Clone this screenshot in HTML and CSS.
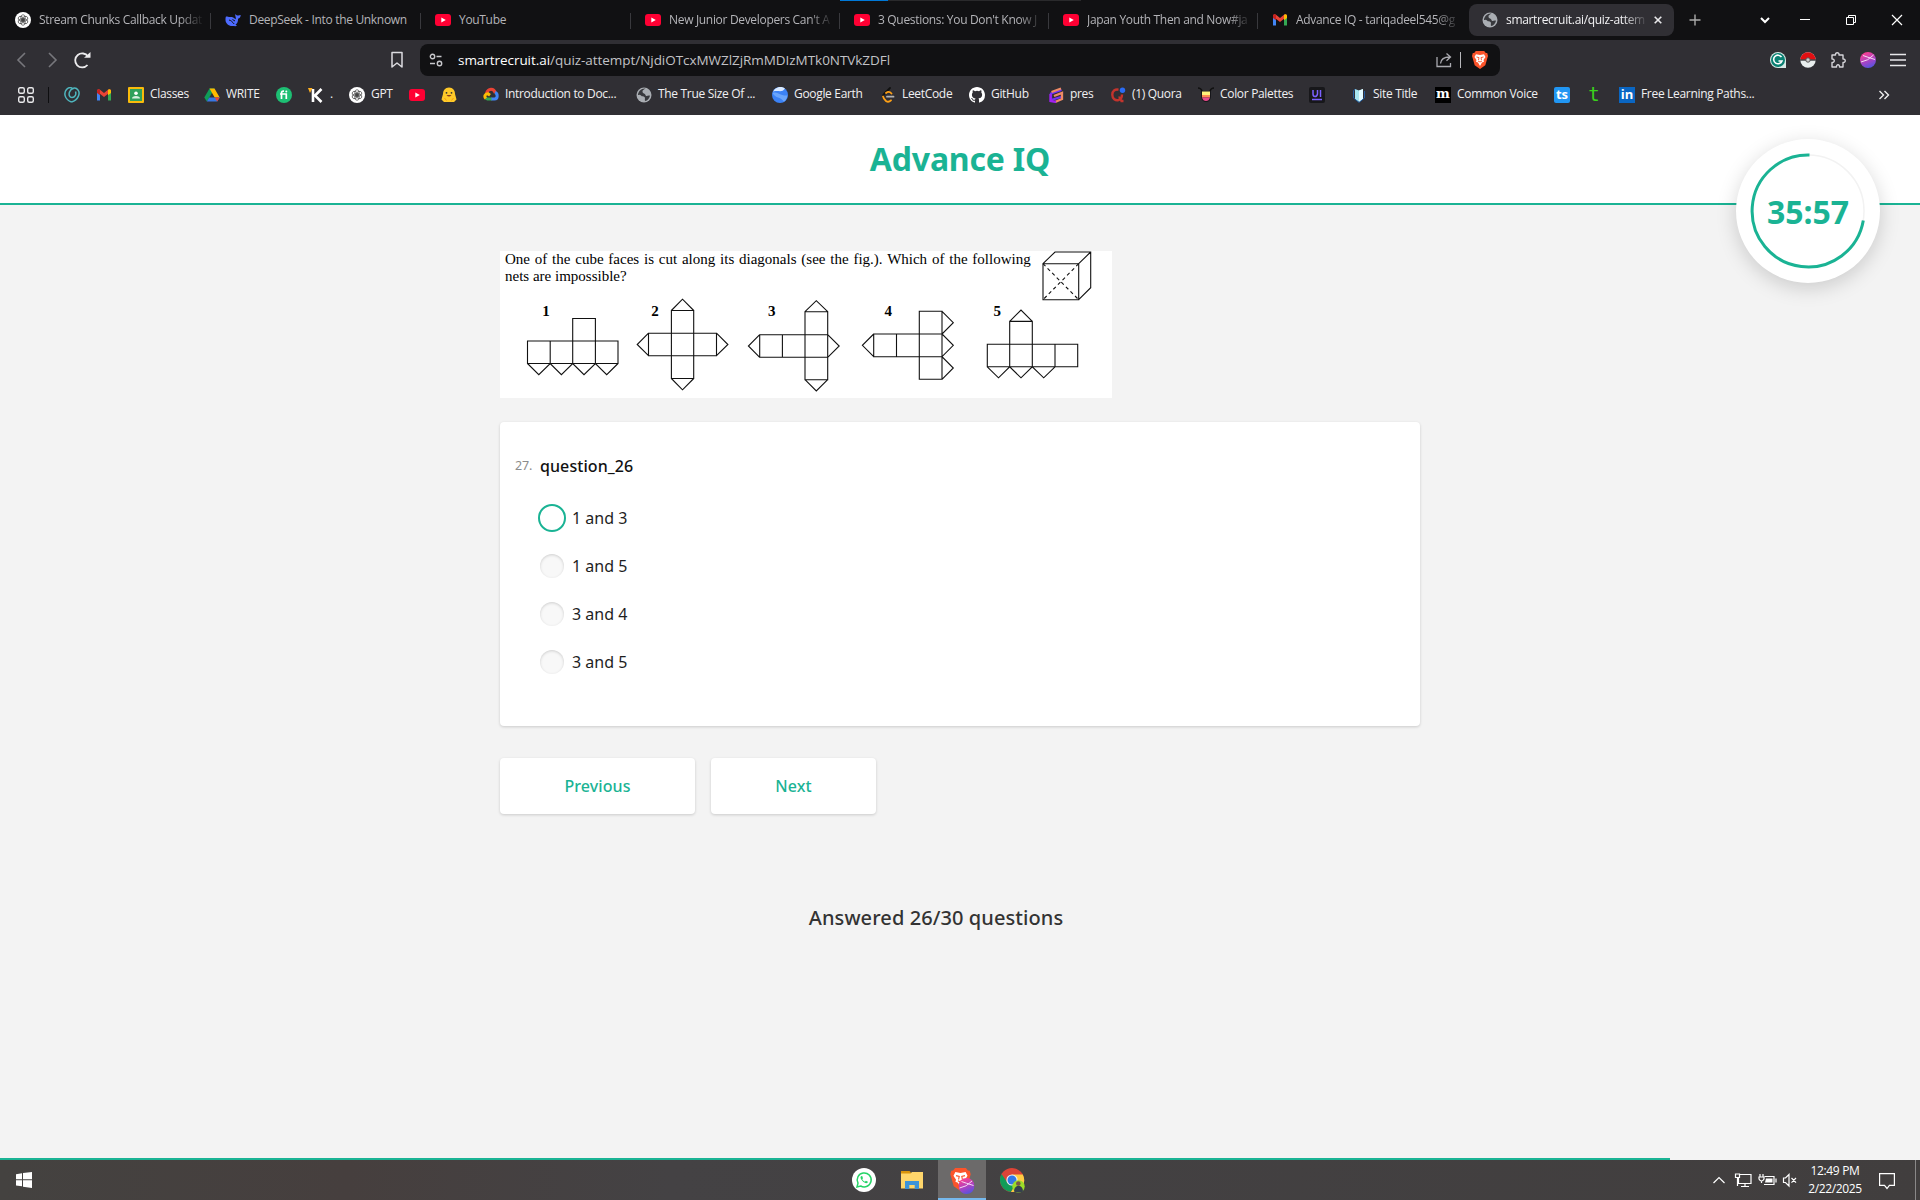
FILE: index.html
```html
<!DOCTYPE html>
<html lang="en">
<head>
<meta charset="utf-8">
<title>Advance IQ</title>
<link rel="stylesheet" href="styles.css">
</head>
<body>
<svg class="defs" width="0" height="0">
  <symbol id="gpt" viewBox="0 0 16 16"><circle cx="8" cy="8" r="8" fill="#fff"/><g fill="none" stroke="#333" stroke-width=".65"><ellipse cx="8" cy="5.800" rx="2.200" ry="3.100"/><ellipse cx="8" cy="5.800" rx="2.200" ry="3.100" transform="rotate(60 8 8)"/><ellipse cx="8" cy="5.800" rx="2.200" ry="3.100" transform="rotate(120 8 8)"/><ellipse cx="8" cy="5.800" rx="2.200" ry="3.100" transform="rotate(180 8 8)"/><ellipse cx="8" cy="5.800" rx="2.200" ry="3.100" transform="rotate(240 8 8)"/><ellipse cx="8" cy="5.800" rx="2.200" ry="3.100" transform="rotate(300 8 8)"/></g></symbol>
  <symbol id="yt" viewBox="0 0 16 16"><rect y="2" width="16" height="12" rx="3" fill="#ff0033"/><path d="M6.3 5.500v5L10.800 8z" fill="#fff"/></symbol>
  <symbol id="gmail" viewBox="0 0 16 16"><path d="M1 3v10.500h3V7.200z" fill="#4285f4"/><path d="M15 3v10.500h-3V7.200z" fill="#34a853"/><path d="M1 4.500 8 10l7-5.500V3.300q-1.300-1.800-3-.5L8 6 4 2.800Q2.300 1.500 1 3.300z" fill="#ea4335"/><path d="M12 2.800q1.800-1.300 3 .5V6l-3 2.200z" fill="#fbbc04"/><path d="M4 2.800Q2.200 1.500 1 3.300V6l3 2.200z" fill="#c5221f"/></symbol>
  <symbol id="globe" viewBox="0 0 16 16"><circle cx="8" cy="8" r="7.500" fill="#a9adb2"/><path d="M9.500 1.500C8 2.500 6 3 6.500 5S9 6 9.500 8s2.500 0 4.500.8c-.5 2.500-2.500 5-5 5.200-.5-2 .5-3-.5-4S6 10 5 8.500 2.500 8 2 8c0-3.500 3.500-7 7.500-6.500z" fill="#38393d"/></symbol>
  <symbol id="brave" viewBox="0 0 16 18"><path d="M3.800 0h8.400l1.600 1.900 1.400.2.800 2.800-.7 2.300-2 7L8 18l-5.300-3.800-2-7L0 4.900l.8-2.800 1.400-.2z" fill="#fb542b"/><path d="M4 3.200 8 4l4-.8L13.500 6l-2 3.100.5 1.600-2 .8L8 15l-2-3.500-2-.8.5-1.600L2.500 6z" fill="#fff"/><path d="m4.500 6 2.500.6L6.500 9M11.500 6 9 6.600l.5 2.400M6 10l2 1 2-1" fill="none" stroke="#fb542b" stroke-width=".9"/></symbol>
  <symbol id="orb" viewBox="0 0 16 16"><linearGradient id="og" x1=".3" y1="0" x2=".7" y2="1"><stop stop-color="#ff3f8e"/><stop offset=".6" stop-color="#a044c8"/><stop offset="1" stop-color="#4e55e0"/></linearGradient><circle cx="8" cy="8" r="8" fill="url(#og)"/><path d="M1 10Q8 9 13.500 3M3 3.500q4 1.500 12 4" fill="none" stroke="#f6d9f4" stroke-width="1"/></symbol>
</svg>

<div class="browser">
  <div class="tabbar">
    <div class="tab"><svg class="ic"><use href="#gpt"/></svg><span class="fade">Stream Chunks Callback Updat</span></div>
    <div class="tab"><svg class="ic" viewBox="0 0 16 16"><path d="M1 4.500c2 0 3 .8 4.500.5 2 0 3.500.5 5 2.200C11.500 6 10 4.500 10.200 2c1 1.500 2 1.500 3 1.500l2.500-.5c0 2-1 3.300-2.700 3.800.3 3-1 5-2.500 5.800l1.500 1.200c-1.500.7-3 .2-4 .2C4 14.500.5 11.500.5 8 .5 6.500.5 5.500 1 4.500z" fill="#4d6bfe"/><path d="M4 8c2 .3 3.500 2 5.200 4M7.500 7.500l2.500 1.500" stroke="#111" fill="none"/></svg><span class="full">DeepSeek - Into the Unknown</span></div>
    <div class="tab"><svg class="ic"><use href="#yt"/></svg><span class="full">YouTube</span></div>
    <div class="tab"><svg class="ic"><use href="#yt"/></svg><span class="fade">New Junior Developers Can't A</span></div>
    <div class="tab"><svg class="ic"><use href="#yt"/></svg><span class="fade">3 Questions: You Don't Know J</span></div>
    <div class="tab"><svg class="ic"><use href="#yt"/></svg><span class="fade">Japan Youth Then and Now#ja</span></div>
    <div class="tab last"><svg class="ic"><use href="#gmail"/></svg><span class="fade">Advance IQ - tariqadeel545@g</span></div>
    <div class="tab active"><svg class="ic"><use href="#globe"/></svg><span class="fade">smartrecruit.ai/quiz-attem</span><svg class="x" viewBox="0 0 8 8"><path d="m.7.7 6.600 6.600M7.300.7.7 7.300" stroke="#e8e8ea" stroke-width="1.600"/></svg></div>
    <svg class="plus" viewBox="0 0 12 12"><path d="M6 .5v11M.5 6h11" stroke="#aaa" stroke-width="1.400"/></svg>
    <svg class="winctl" viewBox="0 0 150 16"><g fill="none" stroke="#fff"><path d="m6 6 4 4 4-4" stroke-width="2"/><path d="M45 7.500h10"/><path d="M91.500 5.500h7v7h-7zM93.500 5.500v-2h7v7h-2"/><path d="m137 3 10 10M147 3l-10 10" stroke-width="1.200"/></g></svg>
    <div class="loadstrip"></div>
  </div>

  <div class="toolbar">
    <svg class="nav" viewBox="0 0 100 24"><g fill="none" stroke="#77777c" stroke-width="1.600"><path d="m17 5-7 7 7 7M41 5l7 7-7 7"/><path d="M80 8.500A7 7 0 1 0 79.500 17" stroke="#ececee" stroke-width="1.800"/></g><path d="M76 9.800h6.500V4z" fill="#ececee"/></svg>
    <svg class="mark" viewBox="0 0 14 18"><path d="M2 1.500h10v14.500l-5-4-5 4z" fill="none" stroke="#dcdce0" stroke-width="1.500" stroke-linejoin="round"/></svg>
    <div class="address">
      <svg class="tune" viewBox="0 0 14 14"><g fill="none" stroke="#c8c8cc" stroke-width="1.400"><circle cx="3.500" cy="3.500" r="2.200"/><path d="M7.500 3.500h5M1 10.500h5"/><circle cx="10.500" cy="10.500" r="2.200"/></g></svg>
      <span class="url"><b>smartrecruit.ai</b>/quiz-attempt/NjdiOTcxMWZlZjRmMDIzMTk0NTVkZDFl</span>
      <svg class="share" viewBox="0 0 16 16"><path d="M1 5v9.500h13.500V11M4.500 11.500C5 7.500 8 5 13.500 5M10.500 1.500 14.500 5l-4 3.700" fill="none" stroke="#aaaab0" stroke-width="1.300"/></svg>
      <i class="sep"></i>
      <svg class="lion"><use href="#brave"/></svg>
    </div>
    <div class="exts">
      <svg class="ic" viewBox="0 0 16 16"><path d="M8 0a8 8 0 0 1 8 8v8H8A8 8 0 0 1 8 0z" fill="#d8eae6"/><circle cx="8" cy="8" r="7" fill="#0a8072"/><path d="M11.500 5A4.300 4.300 0 1 0 12 9H8.500" fill="none" stroke="#fff" stroke-width="1.600"/></svg>
      <svg class="ic" viewBox="0 0 16 16"><circle cx="8" cy="8" r="7.700" fill="#e9eeee"/><path d="M.3 8a7.700 7.700 0 0 1 15.400 0z" fill="#e00f12"/><path d="M0 8h16" stroke="#46484b" stroke-width="1.500"/><circle cx="8" cy="8" r="2.200" fill="#ccc" stroke="#555"/></svg>
      <svg class="ic" viewBox="0 0 16 16"><path d="M2 3h3.500C5 0 9.500 0 9 3h4v4c3-.5 3 4 0 3.500V15H9.500C10 12 6 12 6.500 15H2v-4.500c3 .5 3-4 0-3.500z" fill="none" stroke="#d4d4d8" stroke-width="1.400" stroke-linejoin="round"/></svg>
      <svg class="ic"><use href="#orb"/></svg>
      <svg class="ic" viewBox="0 0 16 16"><path d="M0 2.500h16M0 8h16M0 13.500h16" stroke="#e8e8ea" stroke-width="1.300"/></svg>
    </div>
  </div>

  <div class="bookmarks">
    <svg class="ic" viewBox="0 0 16 16"><g fill="none" stroke="#e8e8ea" stroke-width="1.400"><rect x=".7" y=".7" width="5.600" height="5.600" rx="1.500"/><rect x="9.700" y=".7" width="5.600" height="5.600" rx="1.500"/><rect x=".7" y="9.700" width="5.600" height="5.600" rx="1.500"/><rect x="9.700" y="9.700" width="5.600" height="5.600" rx="1.500"/></g></svg>
    <i class="bar"></i>
    <div class="bm"><svg class="ic" viewBox="0 0 16 16"><g fill="none" stroke="#4fb6be" stroke-width="1.500"><path d="M7.500 15C.5 12.500-.5 6 2.500 2.500 5-.5 8.500.5 9 2.500M7.500 15C14.500 13 16.500 6 14 3 11.500-.5 7 1 5.500 5c-1 3 0 5.500 2.500 5.500 3 0 4.500-3 3.500-6"/></g></svg></div>
    <div class="bm"><svg class="ic"><use href="#gmail"/></svg></div>
    <div class="bm"><svg class="ic" viewBox="0 0 16 16"><rect width="16" height="16" rx="1" fill="#f9bb0b"/><rect x="2" y="2" width="12" height="12" fill="#2fa15c"/><circle cx="8" cy="6.300" r="1.800" fill="#fff"/><path d="M4 11.500q0-2.500 4-2.500t4 2.500z" fill="#d7efdf"/></svg><span>Classes</span></div>
    <div class="bm"><svg class="ic" viewBox="0 0 16 16"><path d="M5.500 1.500h5L5 11l-2.200 3.500L.3 10.500z" fill="#0f9d58"/><path d="M5.500 1.500h5l5.200 9h-5z" fill="#ffba00"/><path d="M5.200 10.500h10.500l-2.500 4H2.800z" fill="#3777e3"/><path d="M10.700 10.500h5l-2.500 4z" fill="#ea4335"/></svg><span>WRITE</span></div>
    <div class="bm"><svg class="ic" viewBox="0 0 16 16"><circle cx="8" cy="8" r="8" fill="#1dbf73"/><path d="M5.500 12V6q0-2 2.500-1.800M4 7h6.300v5" fill="none" stroke="#fff" stroke-width="1.700"/><circle cx="10.300" cy="4.500" r="1" fill="#fff"/></svg></div>
    <div class="bm"><svg class="ic" viewBox="0 0 16 16"><path d="M0 1h4.500L2 6z" fill="#ffb020"/><path d="M5 2v13M13.500 2 7 8.500l6.500 6.500" fill="none" stroke="#fff" stroke-width="2.600"/></svg><span>.</span></div>
    <div class="bm"><svg class="ic"><use href="#gpt"/></svg><span>GPT</span></div>
    <div class="bm"><svg class="ic"><use href="#yt"/></svg></div>
    <div class="bm"><svg class="ic" viewBox="0 0 16 16"><path d="M8 .5c4 0 6 3 6 6.500l1.500 5.500L13 15H3L.5 12.500 2 7C2 3.500 4 .5 8 .5z" fill="#ffc928"/><path d="M5.500 8q2.500 3 5 0" fill="#8b3b1c"/><circle cx="5.500" cy="5.800" r=".9" fill="#333"/><circle cx="10.500" cy="5.800" r=".9" fill="#333"/><path d="m3.500 11 2 2.500M12.500 11l-2 2.500" stroke="#f59e0b"/></svg></div>
    <div class="bm"><svg class="ic" viewBox="0 0 16 16"><g fill="none" stroke-width="3"><path d="M3.500 6.500C5 1 11 1 12.300 6" stroke="#ea4335"/><path d="M12 5.500c3 1 3 6.500-.5 6.500H8" stroke="#4285f4"/><path d="M8.500 12H4.500l-2-1" stroke="#34a853"/><path d="M2.800 11.500C1 9.500 2 6.500 5 6.700l2 1.500" stroke="#fbbc04"/></g></svg><span>Introduction to Doc...</span></div>
    <div class="bm"><svg class="ic"><use href="#globe"/></svg><span>The True Size Of ...</span></div>
    <div class="bm"><svg class="ic" viewBox="0 0 16 16"><circle cx="8" cy="8" r="8" fill="#3b82f6"/><path d="M1 4.500A8 8 0 0 1 13 1.500C10 6 7 3 1 4.500z" fill="#d9e9ff"/><path d="M.3 6C6 4 7 9 15.500 8.500 15 12 13 14 12 14.800 8 9 4 12 .3 6z" fill="#6aa5fb"/></svg><span>Google Earth</span></div>
    <div class="bm"><svg class="ic" viewBox="0 0 16 16"><g fill="none" stroke-width="1.800" stroke-linecap="round"><path d="M10 1 4.500 6.500q-2 2-1.500 3.500" stroke="#111"/><path d="M3 9.500q.5 2 3 4.500 2.500 1.800 5-.7M6 6q3-2.500 5.500.5" stroke="#ffa116"/><path d="M7 9.700h6.500" stroke="#b3b3b3"/></g></svg><span>LeetCode</span></div>
    <div class="bm"><svg class="ic" viewBox="0 0 16 16"><path fill="#fff" d="M8 0C3.580 0 0 3.580 0 8c0 3.540 2.290 6.530 5.470 7.590.4.070.55-.17.55-.38 0-.19-.01-.82-.01-1.490-2.010.37-2.530-.49-2.690-.94-.09-.23-.48-.94-.82-1.130-.28-.15-.68-.52-.01-.53.63-.01 1.080.58 1.230.82.72 1.210 1.870.87 2.330.66.070-.52.28-.87.51-1.070-1.780-.2-3.640-.89-3.640-3.950 0-.87.31-1.590.82-2.150-.08-.2-.36-1.020.08-2.120 0 0 .67-.21 2.200.82a7.600 7.600 0 0 1 4 0c1.530-1.040 2.200-.82 2.200-.82.44 1.100.16 1.920.08 2.120.51.56.82 1.270.82 2.150 0 3.070-1.870 3.750-3.650 3.950.29.25.54.73.54 1.480 0 1.070-.01 1.930-.01 2.200 0 .21.15.46.55.38A8 8 0 0 0 16 8c0-4.420-3.580-8-8-8z"/></svg><span>GitHub</span></div>
    <div class="bm"><svg class="ic" viewBox="0 0 16 16"><g fill="none" stroke-width="2.300"><path d="M13.500 3 3 6.500V13l10-3" stroke="#7132f5"/><path d="M3.500 5 13 1.500M6 9l8-3v6l-7 3" stroke="#f08a66"/><path d="M2.500 7v7L8 15" stroke="#a020f0"/></g></svg><span>pres</span></div>
    <div class="bm"><svg class="ic" viewBox="0 0 16 16"><path d="M8.500 2.700C5 2 2.300 4 2.300 7.800c0 4 3.200 6 6.200 5.300s3.500-3 3.500-5.500M8.500 10.500q2 0 3 3.500h2" fill="none" stroke="#c3342d" stroke-width="2.400"/><circle cx="12.500" cy="3.300" r="2.700" fill="#2a6cf5"/></svg><span>(1) Quora</span></div>
    <div class="bm"><svg class="ic" viewBox="0 0 16 16"><path d="M0 1q3 0 4 3M16 1q-3 0-4 3" stroke="#111" stroke-width="1.500" fill="none"/><path d="M3 4h10v6q-1 5-5 5t-5-5z" fill="#16161a"/><path d="M4 4.500h8V8H4z" fill="#fff27a"/><path d="M4 8h8v2.500H4z" fill="#ff8c55"/><path d="M4 10.500h8q-1 3.500-4 3.500t-4-3.500z" fill="#e94a8b"/></svg><span>Color Palettes</span></div>
    <div class="bm"><svg class="ic" viewBox="0 0 16 16"><rect width="16" height="16" rx="2" fill="#17171a"/><path d="M4 3v4q0 2.500 2 2.500T8.500 7V3M11.500 3v7M3 12.500h10" stroke="#7b61ff" stroke-width="1.500" fill="none"/></svg></div>
    <div class="bm"><svg class="ic" viewBox="0 0 16 16"><path d="m4 2 4 1.500L12 2v10l-4 3-4-3z" fill="#a8e6f0"/><path d="M8 3.500V15l4-3V2z" fill="#e4fbff"/><path d="M4 2 2.500 4v7L8 15.500l5.500-4.500V4" stroke="#225a9c" fill="none"/></svg><span>Site Title</span></div>
    <div class="bm"><span class="tile m">m</span><span>Common Voice</span></div>
    <div class="bm"><span class="tile ts">ts</span></div>
    <div class="bm"><span class="tile t">t</span></div>
    <div class="bm"><span class="tile in">in</span><span>Free Learning Paths...</span></div>
    <svg class="more" viewBox="0 0 12 10"><path d="m1.500 1 4 4-4 4M6.500 1l4 4-4 4" fill="none" stroke="#eee" stroke-width="1.400"/></svg>
  </div>
</div>

<main class="page">
  <header class="head"><h1>Advance IQ</h1></header>
  <div class="timer">
    <svg viewBox="0 0 144 144"><circle cx="72" cy="72" r="56" fill="none" stroke="#f2f2f2" stroke-width="1.500"/><path d="M127.300 81.500A56 56 0 1 1 73.500 16" fill="none" stroke="#1ab394" stroke-width="3"/></svg>
    <span>35:57</span>
  </div>
  <div class="content">
    <svg class="figure" width="612" height="147" viewBox="0 0 612 147">
      <g class="serif">
        <text class="wide" x="5" y="13.300">One of the cube faces is cut along its diagonals (see the fig.). Which of the following</text>
        <text x="5" y="30">nets are impossible?</text>
        <g class="num"><text x="46" y="65">1</text><text x="155" y="65">2</text><text x="271.700" y="65">3</text><text x="388.300" y="65">4</text><text x="497.300" y="65">5</text></g>
      </g>
      <g class="lines">
        <path d="M27.500 90H118v22.500H27.500zM50.200 90v22.500M72.700 112.500V67.500h22.700v45M27.500 112.500l11.300 11.200 11.400-11.200 11.200 11.200 11.300-11.200 11.300 11.200 11.400-11.200 11.300 11.200 11.300-11.200"/>
        <path d="M148.500 82.200h68v22.500h-68zM171.400 59.500h22.300v68h-22.300zM171.400 59.500 182.500 48.200l11.200 11.300M171.400 127.500l11.100 11.300 11.200-11.300M148.500 82.200 137.200 93.500l11.300 11.200M216.500 82.200l11.400 11.300-11.400 11.200"/>
        <path d="M259.700 83.700h68v22.600h-68zM282.400 83.700v22.600M305 60.700h22.700v68H305zM305 60.700l11.300-11 11.400 11M305 128.700l11.300 11.300 11.400-11.300M259.700 83.700 248.400 95l11.300 11.300M327.700 83.700 339.200 95l-11.500 11.300"/>
        <path d="M373.700 83H442v22.700h-68.300zM396.500 83v22.700M419.300 60.300H442v68h-22.700zM373.700 83l-11.300 11.300 11.300 11.400M442 60.300l11.300 11.400L442 83l11.300 11.300-11.300 11.400 11.300 11.300-11.300 11.300"/>
        <path d="M487.300 93.300h90.400v22.500h-90.400zM509.700 115.800V70.400h22.600v45.400M555 93.300v22.500M509.700 70.400 521 59l11.300 11.400M487.300 115.800l11.200 11 11.200-11 11.300 11 11.300-11 11.400 11 11.300-11"/>
        <path d="M543 12.700h35.700v36H543zM543 12.700 555 1h35.700v35.700l-12 12M578.700 12.700 590.700 1"/>
        <path d="m543 12.700 35.700 36M578.700 12.700 543 48.700" stroke-dasharray="3.500 3"/>
      </g>
    </svg>
    <section class="card">
      <div class="q"><small>27.</small><strong>question_26</strong></div>
      <label class="opt"><i class="radio on"></i>1 and 3</label>
      <label class="opt"><i class="radio"></i>1 and 5</label>
      <label class="opt"><i class="radio"></i>3 and 4</label>
      <label class="opt"><i class="radio"></i>3 and 5</label>
    </section>
    <div class="actions"><button class="prev">Previous</button><button class="next">Next</button></div>
    <p class="answered">Answered 26/30 questions</p>
  </div>
  <div class="progress"><div class="fill"></div></div>
</main>

<footer class="taskbar">
  <svg class="win" viewBox="0 0 16 16"><path d="M0 2.200 6 1.300v6H0zM7 1.100 16 0v7.300H7zM0 8.300h6v6L0 13.400zM7 8.300h9V16l-9-1.200z" fill="#fff"/></svg>
  <div class="apps">
    <div class="app"><svg width="24" height="24" viewBox="0 0 24 24"><circle cx="12" cy="12" r="12" fill="#fff"/><path d="m5 19 1-3.800A7 7 0 1 1 8.700 18z" fill="none" stroke="#25d366" stroke-width="1.500"/><path d="M9 8.300c-1 1.200-.5 2.700 1.500 4.700s4 3 5.200 1.500l.2-.8-2-1-1 1q-1.700-.7-2.700-2.500l.8-1L10.200 8z" fill="#25d366"/></svg></div>
    <div class="app"><svg width="22" height="18" viewBox="0 0 22 18"><path d="M0 0h8.500l1.500 1.500V5H0z" fill="#d9940c"/><path d="M0 2.500h9.500L11 1h11v16.500H0z" fill="#ffd66b"/><path d="M4 18v-8h14v8h-4.300v-4H8.300v4z" fill="#3d94d9"/></svg></div>
    <div class="app on"><svg width="25" height="26" viewBox="0 0 25 26"><svg width="21" height="23"><use href="#brave"/></svg><svg x="8.500" y="10" width="16" height="16"><use href="#orb"/></svg></svg></div>
    <div class="app"><svg width="25" height="25" viewBox="0 0 25 25"><circle cx="12" cy="12" r="12" fill="#dd4437"/><path d="M1.600 6A12 12 0 0 0 11 24l5-9-9-1z" fill="#119c58"/><path d="M12 6.500h10.800A12 12 0 0 1 11 24l5.500-9z" fill="#fc4"/><circle cx="12" cy="12" r="5.600" fill="#f4f4f4"/><circle cx="12" cy="12" r="4.500" fill="#3479e8"/><circle cx="18.500" cy="18.500" r="6.200" fill="#9bdc28"/><path d="M14 23.500q0-5 4.500-6 4.500 1 4.500 6-4 2-9 0z" fill="#35404e"/><circle cx="18.300" cy="15.500" r="2.300" fill="#7a5847"/></svg></div>
  </div>
  <div class="tray">
    <svg width="95" height="16" viewBox="0 0 95 16"><g fill="none" stroke="#fff" stroke-width="1.200"><path d="m1.500 11 5.500-5.500L12.500 11"/><path d="M27.500 2.500H39v9H26.500V6M33 11.500V14M29 14.500h8"/><path d="M23.500 2h4v3.500h-4zM25.500 5.500V14"/><path d="M52.500 4.500h9.500v8h-10M64 6.500v4"/><path d="M48 2v3M51 2v3M47 5h5v2q-1 2-2.500 2T47 7zM49.500 9v2"/><path d="M71.500 6v4.500h2l3.500 3.500V2.500L73.500 6zM79.500 6l4.500 4.700M84 6l-4.500 4.700"/></g><path d="M54 6.500h6.500v4H53z" fill="#fff"/></svg>
    <div class="clock"><span>12:49 PM</span><span>2/22/2025</span></div>
    <svg class="note" width="16" height="17" viewBox="0 0 16 17"><path d="M.6.6h14.800v11.800h-5L8 15.500l-2.500-3.100H.6z" fill="none" stroke="#fff" stroke-width="1.200"/></svg>
    <i class="desk"></i>
  </div>
</footer>
</body>
</html>
```
FILE: styles.css
```css
* { box-sizing: border-box; }
body { margin: 0; width: 1920px; height: 1200px; overflow: hidden; display: flex; flex-direction: column; font-family: "Noto Sans", "Open Sans", sans-serif; background: #f3f3f3; }
svg { display: block; flex: none; }
.defs { position: absolute; }
.ic { width: 16px; height: 16px; }

.browser { height: 115px; flex: none; background: #302f34; color: #f0f0f2; font-family: "Open Sans", sans-serif; font-size: 12px; letter-spacing: -0.32px; white-space: nowrap; }
.tabbar { position: relative; height: 40px; padding-left: 1px; background: #111113; display: grid; grid-template-columns: 210px 210px 210px 209px 209px 209px 211px 205px 42px 1fr; align-items: center; }
.tab { position: relative; display: flex; align-items: center; gap: 8px; height: 32px; padding: 0 9px 0 14px; color: #b4b4b8; }
.tab::after { content: ""; position: absolute; right: 0; top: 9px; width: 1px; height: 16px; background: #39393d; }
.tab.last::after, .tab.active::after { display: none; }
.fade, .full { flex: 1; min-width: 0; line-height: 18px; }
.fade { -webkit-mask-image: linear-gradient(90deg, #000 140px, transparent 165px); mask-image: linear-gradient(90deg, #000 140px, transparent 165px); }
.tab.active { background: #302f34; border-radius: 8px; color: #f2f2f4; padding: 0 12px 0 13px; }
.tab.active .fade { -webkit-mask-image: linear-gradient(90deg, #000 117px, transparent 142px); mask-image: linear-gradient(90deg, #000 117px, transparent 142px); }
.x { width: 8px; height: 8px; }
.plus { width: 12px; height: 12px; margin-left: 15px; }
.winctl { width: 150px; height: 16px; margin-left: 39px; }
.loadstrip { position: absolute; left: 840px; top: 0; width: 241px; height: 1px; background: linear-gradient(90deg, #0078d7 48px, #2a2a2c 48px); }

.toolbar { height: 40px; display: flex; align-items: center; }
.nav { width: 100px; height: 24px; margin: 0 282px 0 8px; }
.mark { width: 14px; height: 18px; }
.address { width: 1080px; height: 32px; margin-left: 16px; padding: 0 12px 0 9px; background: #111113; border-radius: 8px; display: flex; align-items: center; }
.tune { width: 14px; height: 14px; margin-right: 15px; }
.url { flex: 1; font-size: 13.5px; letter-spacing: -0.05px; color: #c2c2c6; }
.url b { font-weight: 400; color: #fff; }
.share { width: 16px; height: 16px; }
.sep { width: 1px; height: 16px; background: #b8b8bc; margin: 0 11px 0 8px; }
.lion { width: 16px; height: 18px; }
.exts { margin-left: 270px; display: flex; gap: 14px; }

.bookmarks { height: 30px; padding-left: 18px; display: grid; grid-template-columns: 30px 16px 32px 32px 76px 72px 32px 41px 60px 32px 42px 153px 136px 108px 89px 79px 62px 88px 111px 42px 84px 119px 32px 33px 259px 12px; align-items: center; }
.bar { width: 1px; height: 16px; background: #0e0e10; }
.bm { display: flex; align-items: center; gap: 6px; }
.bm span:not(.tile) { line-height: 16px; padding-bottom: 2px; }
.more { width: 12px; height: 10px; }
.tile { width: 16px; height: 16px; display: block; text-align: center; font-weight: 700; line-height: 14px; letter-spacing: 0; color: #fff; font-size: 13px; }
.m { background: #000; font-family: "DejaVu Serif", serif; line-height: 13px; }
.ts { background: #2196f3; border-radius: 2px; }
.t { color: #3ad11c; font-family: "DejaVu Sans Mono", monospace; font-size: 19px; font-weight: 400; line-height: 15px; }
.in { background: #0a66c2; }

.page { position: relative; flex: 1; display: flex; flex-direction: column; }
.head { height: 90px; background: #fff; border-bottom: 2px solid #1ab394; }
.head h1 { margin: 0; padding-top: 22px; font-size: 32px; line-height: 44px; letter-spacing: -.2px; text-align: center; color: #1ab394; }
.timer { position: absolute; left: 1736px; top: 24px; width: 144px; height: 144px; border-radius: 50%; background: #fff; box-shadow: 0 5px 20px rgba(0,0,0,.17); display: grid; place-items: center; }
.timer > * { grid-area: 1 / 1; }
.timer span { font-size: 32px; font-weight: 700; color: #1ab394; line-height: 44px; padding-top: 2px; }
.content { width: 920px; margin: 46px auto 0; flex: 1; }
.figure { background: #fff; }
.serif { font-family: "Liberation Serif", serif; font-size: 15px; fill: #000; }
.wide { word-spacing: 1.06px; }
.num { font-weight: 700; text-anchor: middle; }
.lines { fill: none; stroke: #111; stroke-width: 1.1; }
.card { height: 304px; margin-top: 24px; padding: 32px 15px; background: #fff; border-radius: 4px; box-shadow: 0 1px 3px rgba(0,0,0,.17); font-size: 16px; color: #1e1e1e; }
.q { display: flex; align-items: flex-start; gap: 7px; line-height: 24px; height: 40px; }
.q small { width: 18px; font-size: 12.5px; color: #8c8c8c; letter-spacing: -.1px; }
.q strong { font-weight: 500; color: #111; letter-spacing: .08px; }
.opt { display: flex; align-items: center; height: 48px; padding-left: 25px; gap: 8px; }
.radio { width: 24px; height: 24px; border-radius: 50%; background: #f8f8f8; box-shadow: inset 0 1px 3px rgba(0,0,0,.17); }
.radio.on { width: 28px; height: 28px; margin: 0 -2px; background: #fff; border: 2px solid #1ab394; box-shadow: none; }
.actions { display: flex; gap: 16px; margin-top: 32px; }
button { height: 56px; border: 0; border-radius: 4px; background: #fff; box-shadow: 0 1px 3px rgba(0,0,0,.17); font: 500 16px "Noto Sans", sans-serif; letter-spacing: .1px; color: #1ab394; padding: 0; }
.prev { width: 195px; }
.next { width: 165px; }
.answered { margin: 90px 0 0; width: 872px; text-align: center; font-size: 20px; font-weight: 500; line-height: 28px; letter-spacing: .08px; color: #333; }
.progress { height: 2px; }
.fill { width: 1670px; height: 2px; background: #1ab394; }

.taskbar { height: 40px; flex: none; display: flex; align-items: center; background: linear-gradient(90deg, #444240, #463f3e 18%, #444244 35%, #413e3e); }
.win { width: 16px; height: 16px; margin-left: 16px; }
.apps { display: flex; height: 40px; margin-left: 807px; }
.app { width: 49px; display: grid; place-items: center; }
.app:nth-child(2) { width: 50px; padding-right: 2px; }
.app.on { background: #6c6a6a; border-bottom: 2px solid #76b9ed; width: 48px; padding-top: 3px; }
.app:last-child { padding-left: 2px; width: 50px; }
.tray { display: flex; align-items: center; margin-left: auto; height: 40px; color: #fff; font-family: "Open Sans", sans-serif; }
.clock { width: 56px; font-size: 12px; line-height: 18px; letter-spacing: -.35px; display: flex; flex-direction: column; align-items: center; }
.note { margin: 2px 20px 0 16px; }
.desk { width: 5px; height: 40px; border-left: 1px solid #8a8888; }
```
